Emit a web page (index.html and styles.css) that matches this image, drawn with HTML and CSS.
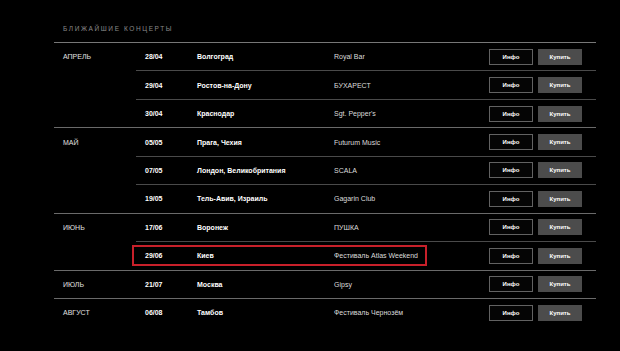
FILE: index.html
```html
<!DOCTYPE html>
<html lang="ru">
<head>
<meta charset="utf-8">
<title>Ближайшие концерты</title>
<link rel="stylesheet" href="styles.css">
</head>
<body>
<section class="concerts">
  <h2 class="title">БЛИЖАЙШИЕ КОНЦЕРТЫ</h2>
  <div class="month">
    <div class="month-name">АПРЕЛЬ</div>
    <div class="events">
      <div class="event"><div class="info"><span class="date">28/04</span><span class="city">Волгоград</span><span class="venue">Royal Bar</span></div><div class="actions"><button class="btn btn-info">Инфо</button><button class="btn btn-buy">Купить</button></div></div>
      <div class="event"><div class="info"><span class="date">29/04</span><span class="city">Ростов-на-Дону</span><span class="venue">БУХАРЕСТ</span></div><div class="actions"><button class="btn btn-info">Инфо</button><button class="btn btn-buy">Купить</button></div></div>
      <div class="event"><div class="info"><span class="date">30/04</span><span class="city">Краснодар</span><span class="venue">Sgt. Pepper's</span></div><div class="actions"><button class="btn btn-info">Инфо</button><button class="btn btn-buy">Купить</button></div></div>
    </div>
  </div>
  <div class="month">
    <div class="month-name">МАЙ</div>
    <div class="events">
      <div class="event"><div class="info"><span class="date">05/05</span><span class="city">Прага, Чехия</span><span class="venue">Futurum Music</span></div><div class="actions"><button class="btn btn-info">Инфо</button><button class="btn btn-buy">Купить</button></div></div>
      <div class="event"><div class="info"><span class="date">07/05</span><span class="city">Лондон, Великобритания</span><span class="venue">SCALA</span></div><div class="actions"><button class="btn btn-info">Инфо</button><button class="btn btn-buy">Купить</button></div></div>
      <div class="event"><div class="info"><span class="date">19/05</span><span class="city">Тель-Авив, Израиль</span><span class="venue">Gagarin Club</span></div><div class="actions"><button class="btn btn-info">Инфо</button><button class="btn btn-buy">Купить</button></div></div>
    </div>
  </div>
  <div class="month">
    <div class="month-name">ИЮНЬ</div>
    <div class="events">
      <div class="event"><div class="info"><span class="date">17/06</span><span class="city">Воронеж</span><span class="venue">ПУШКА</span></div><div class="actions"><button class="btn btn-info">Инфо</button><button class="btn btn-buy">Купить</button></div></div>
      <div class="event"><div class="info info-highlight"><span class="date">29/06</span><span class="city">Киев</span><span class="venue">Фестиваль Atlas Weekend</span></div><div class="actions"><button class="btn btn-info">Инфо</button><button class="btn btn-buy">Купить</button></div></div>
    </div>
  </div>
  <div class="month">
    <div class="month-name">ИЮЛЬ</div>
    <div class="events">
      <div class="event"><div class="info"><span class="date">21/07</span><span class="city">Москва</span><span class="venue">Gipsy</span></div><div class="actions"><button class="btn btn-info">Инфо</button><button class="btn btn-buy">Купить</button></div></div>
    </div>
  </div>
  <div class="month">
    <div class="month-name">АВГУСТ</div>
    <div class="events">
      <div class="event"><div class="info"><span class="date">06/08</span><span class="city">Тамбов</span><span class="venue">Фестиваль Чернозём</span></div><div class="actions"><button class="btn btn-info">Инфо</button><button class="btn btn-buy">Купить</button></div></div>
    </div>
  </div>
</section>
</body>
</html>
```
FILE: styles.css
```css
html, body {
  margin: 0;
  padding: 0;
  background: #000;
}

body {
  font-family: "Liberation Sans", Arial, sans-serif;
  color: #e6e6e6;
  width: 620px;
  height: 351px;
  overflow: hidden;
}

.concerts {
  margin-left: 54px;
  width: 542px;
}

.title {
  margin: 0;
  padding: 25px 0 9px 9px;
  font-size: 6.5px;
  line-height: 8px;
  font-weight: normal;
  letter-spacing: 1.6px;
  color: #8a8a8a;
}

.month {
  display: flex;
  border-top: 1px solid #6a6a6a;
}

.month:first-of-type {
  border-top-color: #777;
}

.month-name {
  width: 73px;
  padding-left: 9px;
  height: 27.44px;
  display: flex;
  align-items: center;
  font-size: 7px;
  color: #e0e0e0;
}

.events {
  flex: 1;
}

.event {
  height: 27.44px;
  display: flex;
  align-items: center;
}

.event + .event {
  border-top: 1px solid #4a4a4a;
}

.info {
  margin-left: -2px;
  width: 280px;
  height: 17px;
  padding-left: 11px;
  display: flex;
  align-items: center;
  font-size: 7px;
}

.info-highlight {
  outline: 2px solid #c8202a;
}

.date {
  width: 52px;
  font-weight: bold;
  color: #fff;
}

.city {
  width: 137px;
  font-weight: bold;
  color: #fff;
}

.venue {
  color: #dcdcdc;
  white-space: nowrap;
}

.actions {
  margin-left: auto;
  margin-right: 14px;
  display: flex;
  gap: 5px;
}

.btn {
  width: 44px;
  height: 16px;
  padding: 0;
  box-sizing: border-box;
  font-family: "Liberation Sans", Arial, sans-serif;
  font-size: 6px;
  font-weight: bold;
  color: #fff;
  cursor: pointer;
}

.btn-info {
  background: #050505;
  border: 1px solid #626262;
}

.btn-buy {
  background: #4c4c4c;
  border: none;
}
```
